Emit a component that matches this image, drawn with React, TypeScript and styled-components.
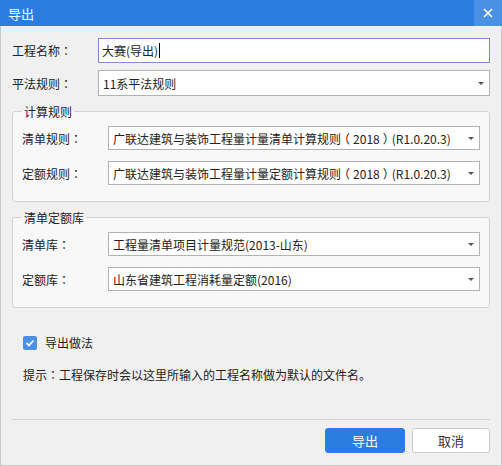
import React from "react";
import styled, { createGlobalStyle } from "styled-components";

const Global = createGlobalStyle`
  html, body { margin: 0; padding: 0; background: #ffffff; }
  body { font-family: "Noto Sans CJK SC", "Noto Sans", sans-serif; }
  * { box-sizing: border-box; }
`;

const Window = styled.div`
  width: 502px;
  height: 466px;
  display: flex;
  flex-direction: column;
  background: #f0f0f0;
  border: 1px solid #c9c9c9;
  border-top: none;
  font-family: "Noto Sans CJK SC", "Noto Sans", sans-serif;
  font-size: 12px;
  color: #222;
`;

const TitleBar = styled.div`
  height: 26px;
  margin: 0 -1px;
  display: flex;
  align-items: stretch;
  background: #2b7de0;
  color: #fff;
`;

const Title = styled.div`
  flex: 1;
  display: flex;
  align-items: center;
  padding-left: 8px;
  font-size: 13px;
`;

const CloseButton = styled.div`
  width: 28px;
  display: flex;
  align-items: center;
  justify-content: center;
  background: #4a91e6;
`;

const Body = styled.div`
  flex: 1;
  display: flex;
  flex-direction: column;
  padding: 12px 11px 12px 11px;
`;

const Row = styled.div<{ $h?: number }>`
  display: flex;
  align-items: center;
  height: ${(p) => p.$h ?? 24}px;
`;

const Label = styled.div`
  width: 86px;
  flex: none;
  line-height: 17px;
  white-space: nowrap;
`;

/* centred full-width punctuation, as in the original UI font */
const Punct = styled.span`
  font-family: "Noto Sans CJK TC", "Noto Sans CJK SC", sans-serif;
`;

/* half-width paren glyph padded back to a full cell, so it sits centred */
const Paren = styled.span`
  font-feature-settings: "halt" 1;
  padding: 0 3px;
`;

const TextField = styled.div`
  flex: 1;
  height: 100%;
  display: flex;
  align-items: center;
  padding-left: 3px;
  background: #fff;
  border: 1px solid #7d8dd3;
  font-size: 12px;
`;

const Caret = styled.span`
  display: inline-block;
  width: 1px;
  height: 15px;
  margin-left: 1px;
  background: #000;
`;

const Select = styled.div`
  flex: 1;
  height: 100%;
  display: flex;
  align-items: center;
  justify-content: space-between;
  padding: 0 5px 0 4px;
  background: #fff;
  border: 1px solid #b2b2b2;
  white-space: nowrap;
`;

const Arrow = styled.span`
  width: 0;
  height: 0;
  border-left: 3px solid transparent;
  border-right: 3px solid transparent;
  border-top: 3px solid #555;
  margin-top: 1px;
`;

const Group = styled.fieldset<{ $mt: number }>`
  margin: ${(p) => p.$mt}px 0 0 0;
  padding: 6px 9px 16px 9px;
  border: 1px solid #d3d3d3;
  border-radius: 3px;
  background: #f8f8f8;
  display: flex;
  flex-direction: column;
  gap: 11px;
  min-width: 0;
`;

const Legend = styled.legend`
  padding: 0 2px;
  margin-left: 0;
  font-size: 12px;
  line-height: 17px;
`;

const CheckRow = styled.label`
  display: flex;
  align-items: center;
  gap: 8px;
  margin: 26px 0 0 11px;
  line-height: 17px;
`;

const CheckBox = styled.span`
  width: 14px;
  height: 14px;
  border-radius: 2px;
  background: #4a90e2;
  display: flex;
  align-items: center;
  justify-content: center;
`;

const Hint = styled.div`
  margin: 15px 0 0 11px;
  line-height: 17px;
`;

const Footer = styled.div`
  margin-top: auto;
  border-top: 1px solid #d4d4d4;
  padding-top: 8px;
  display: flex;
  justify-content: flex-end;
  gap: 7px;
`;

const Button = styled.button<{ $primary?: boolean }>`
  width: ${(p) => (p.$primary ? 80 : 78)}px;
  height: 25px;
  border-radius: 3px;
  font-family: inherit;
  font-size: 13px;
  cursor: pointer;
  border: 1px solid ${(p) => (p.$primary ? "#2b7de0" : "#cdcdcd")};
  background: ${(p) => (p.$primary ? "#2b7de0" : "#ffffff")};
  color: ${(p) => (p.$primary ? "#ffffff" : "#333333")};
`;

const SelectField = ({ children }: { children: React.ReactNode }) => (
  <Select>
    <span>{children}</span>
    <Arrow />
  </Select>
);

const FieldLabel = ({ text }: { text: string }) => (
  <Label>
    {text}
    <Punct>：</Punct>
  </Label>
);

const RuleText = ({ kind }: { kind: string }) => (
  <>
    广联达建筑与装饰工程量计量{kind}计算规则<Paren>（</Paren>2018<Paren>）</Paren>(R1.0.20.3)
  </>
);

export default function App() {
  return (
    <>
      <Global />
      <Window>
        <TitleBar>
          <Title>导出</Title>
          <CloseButton>
            <svg width="10" height="10" viewBox="0 0 10 10">
              <path d="M1 1L9 9M9 1L1 9" stroke="#fff" strokeWidth="1.6" />
            </svg>
          </CloseButton>
        </TitleBar>
        <Body>
          <Row $h={25}>
            <FieldLabel text="工程名称" />
            <TextField>
              大赛(导出)
              <Caret />
            </TextField>
          </Row>
          <Row $h={26} style={{ marginTop: 7 }}>
            <FieldLabel text="平法规则" />
            <SelectField>11系平法规则</SelectField>
          </Row>
          <Group $mt={7}>
            <Legend>计算规则</Legend>
            <Row>
              <FieldLabel text="清单规则" />
              <SelectField>
                <RuleText kind="清单" />
              </SelectField>
            </Row>
            <Row>
              <FieldLabel text="定额规则" />
              <SelectField>
                <RuleText kind="定额" />
              </SelectField>
            </Row>
          </Group>
          <Group $mt={7}>
            <Legend>清单定额库</Legend>
            <Row>
              <FieldLabel text="清单库" />
              <SelectField>工程量清单项目计量规范(2013-山东)</SelectField>
            </Row>
            <Row>
              <FieldLabel text="定额库" />
              <SelectField>山东省建筑工程消耗量定额(2016)</SelectField>
            </Row>
          </Group>
          <CheckRow>
            <CheckBox>
              <svg width="10" height="8" viewBox="0 0 10 8">
                <path d="M1.5 4L4 6.5L8.5 1.5" stroke="#fff" strokeWidth="1.8" fill="none" />
              </svg>
            </CheckBox>
            导出做法
          </CheckRow>
          <Hint>
            提示<Punct>：</Punct>工程保存时会以这里所输入的工程名称做为默认的文件名。
          </Hint>
          <Footer>
            <Button $primary>导出</Button>
            <Button>取消</Button>
          </Footer>
        </Body>
      </Window>
    </>
  );
}
